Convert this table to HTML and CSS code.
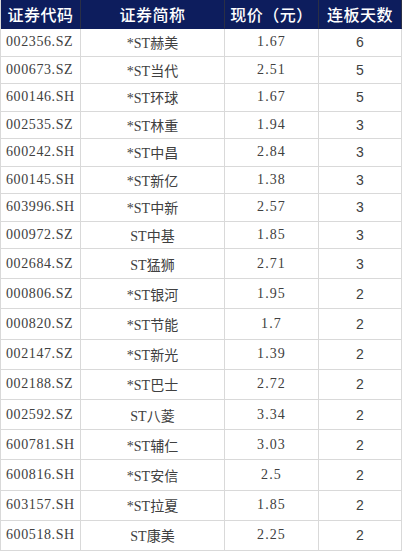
FILE: index.html
```html
<!DOCTYPE html>
<html lang="zh">
<head>
<meta charset="utf-8">
<link rel="stylesheet" href="styles.css">
</head>
<body>
<div class="sheet">
  <div class="th">证券代码</div><div class="th">证券简称</div><div class="th">现价（元）</div><div class="th">连板天数</div>

  <div class="code">002356.SZ</div><div class="name">*ST赫美</div><div class="price">1.67</div><div class="days">6</div>
  <div class="code">000673.SZ</div><div class="name">*ST当代</div><div class="price">2.51</div><div class="days">5</div>
  <div class="code">600146.SH</div><div class="name">*ST环球</div><div class="price">1.67</div><div class="days">5</div>
  <div class="code">002535.SZ</div><div class="name">*ST林重</div><div class="price">1.94</div><div class="days">3</div>
  <div class="code">600242.SH</div><div class="name">*ST中昌</div><div class="price">2.84</div><div class="days">3</div>
  <div class="code">600145.SH</div><div class="name">*ST新亿</div><div class="price">1.38</div><div class="days">3</div>
  <div class="code">603996.SH</div><div class="name">*ST中新</div><div class="price">2.57</div><div class="days">3</div>
  <div class="code">000972.SZ</div><div class="name">ST中基</div><div class="price">1.85</div><div class="days">3</div>
  <div class="code">002684.SZ</div><div class="name">ST猛狮</div><div class="price">2.71</div><div class="days">3</div>
  <div class="code">000806.SZ</div><div class="name">*ST银河</div><div class="price">1.95</div><div class="days">2</div>
  <div class="code">000820.SZ</div><div class="name">*ST节能</div><div class="price">1.7</div><div class="days">2</div>
  <div class="code">002147.SZ</div><div class="name">*ST新光</div><div class="price">1.39</div><div class="days">2</div>
  <div class="code">002188.SZ</div><div class="name">*ST巴士</div><div class="price">2.72</div><div class="days">2</div>
  <div class="code">002592.SZ</div><div class="name">ST八菱</div><div class="price">3.34</div><div class="days">2</div>
  <div class="code">600781.SH</div><div class="name">*ST辅仁</div><div class="price">3.03</div><div class="days">2</div>
  <div class="code">600816.SH</div><div class="name">*ST安信</div><div class="price">2.5</div><div class="days">2</div>
  <div class="code">603157.SH</div><div class="name">*ST拉夏</div><div class="price">1.85</div><div class="days">2</div>
  <div class="code">600518.SH</div><div class="name">ST康美</div><div class="price">2.25</div><div class="days">2</div>
</div>
</body>
</html>
```

FILE: styles.css
```css
html, body {
  margin: 0;
  padding: 0;
  background: #ffffff;
}

.sheet {
  display: grid;
  grid-template-columns: 80px 144px 94px 83px;
  grid-template-rows: 29px repeat(8, 27.5px);
  grid-auto-rows: 30.2px;
  width: 401px;
  border-left: 1px solid #d9d9d9;
  box-sizing: border-box;
}

.sheet > div {
  box-sizing: border-box;
  display: flex;
  align-items: center;
  justify-content: center;
  border-right: 1px solid #d9d9d9;
  border-bottom: 1px solid #d9d9d9;
  color: #404040;
  font-family: "Liberation Serif", "Noto Sans CJK SC", serif;
  font-size: 14px;
  white-space: nowrap;
  overflow: hidden;
}

.sheet > .th {
  background: #0d1d5d;
  color: #ffffff;
  font-family: "Noto Sans CJK SC", sans-serif;
  font-size: 16px;
  font-weight: 500;
  border-right: 1px solid #2a2f45;
  border-bottom: 1px solid #0d1d5d;
  letter-spacing: 0.5px;
}

.sheet > .code {
  justify-content: flex-start;
  padding-left: 5px;
  letter-spacing: 0.6px;
}

.sheet > .price {
  letter-spacing: 1.1px;
}

.sheet > .days {
  font-family: "Liberation Sans", sans-serif;
  font-size: 14px;
}
```
